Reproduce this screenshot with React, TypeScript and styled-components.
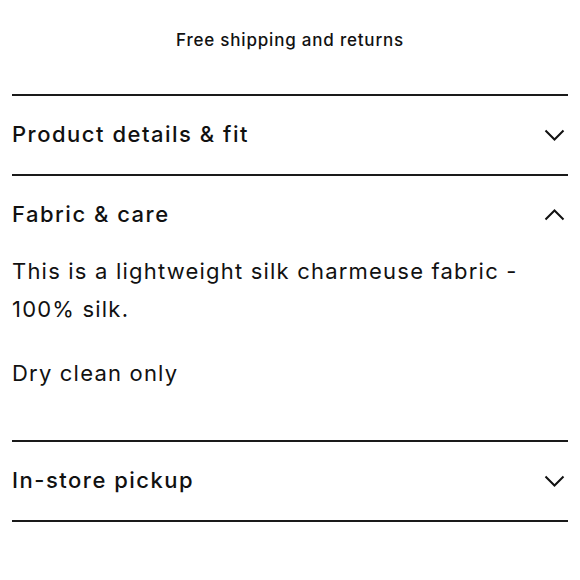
import React from 'react';
import styled, { createGlobalStyle } from 'styled-components';

const GlobalStyle = createGlobalStyle`
    html, body {
        margin: 0;
        padding: 0;
        background: #ffffff;
    }
    body {
        font-family: Inter, 'Liberation Sans', Arial, sans-serif;
        color: #111111;
    }
`;

const Page = styled.div`
    width: 580px;
    padding: 0 12px;
    box-sizing: border-box;
`;

const Banner = styled.div`
    height: 94px;
    padding-top: 30px;
    box-sizing: border-box;
    text-align: center;
    font-size: 17px;
    font-weight: 500;
    letter-spacing: 0.8px;
    line-height: 20px;
`;

const Section = styled.section<{ last?: boolean }>`
    border-top: 2px solid #1a1a1a;
    ${(props): string => (props.last ? 'border-bottom: 2px solid #1a1a1a;' : '')}
`;

const Header = styled.div`
    display: flex;
    align-items: center;
    justify-content: space-between;
    height: 78px;
`;

const Title = styled.h3`
    margin: -3px 0 0;
    font-size: 22px;
    font-weight: 500;
    letter-spacing: 1.5px;
    line-height: 26px;
`;

const Body = styled.div`
    margin-top: -2px;
    padding: 0 0 48px;
    font-size: 22px;
    letter-spacing: 1.2px;
    line-height: 38px;

    p {
        margin: 0 0 26px;
    }
    p:last-child {
        margin-bottom: 0;
    }
`;

const ChevronIcon = styled.svg`
    margin-right: 3px;
    flex-shrink: 0;
`;

const Chevron: React.FC<{ up?: boolean }> = ({ up }) => (
    <ChevronIcon width="21" height="12" viewBox="0 0 21 12" fill="none">
        <path
            d={up ? 'M1.5 10.5 L10.5 1.5 L19.5 10.5' : 'M1.5 1.5 L10.5 10.5 L19.5 1.5'}
            stroke="#111"
            strokeWidth="2"
        />
    </ChevronIcon>
);

const Accordion: React.FC<{
    title: string;
    open?: boolean;
    last?: boolean;
    children?: React.ReactNode;
}> = ({ title, open, last, children }) => (
    <Section last={last}>
        <Header>
            <Title>{title}</Title>
            <Chevron up={open} />
        </Header>
        {open && <Body>{children}</Body>}
    </Section>
);

export default function App() {
    return (
        <Page>
            <GlobalStyle />
            <Banner>Free shipping and returns</Banner>
            <Accordion title="Product details & fit" />
            <Accordion title="Fabric & care" open>
                <p>This is a lightweight silk charmeuse fabric - 100% silk.</p>
                <p>Dry clean only</p>
            </Accordion>
            <Accordion title="In-store pickup" last />
        </Page>
    );
}
